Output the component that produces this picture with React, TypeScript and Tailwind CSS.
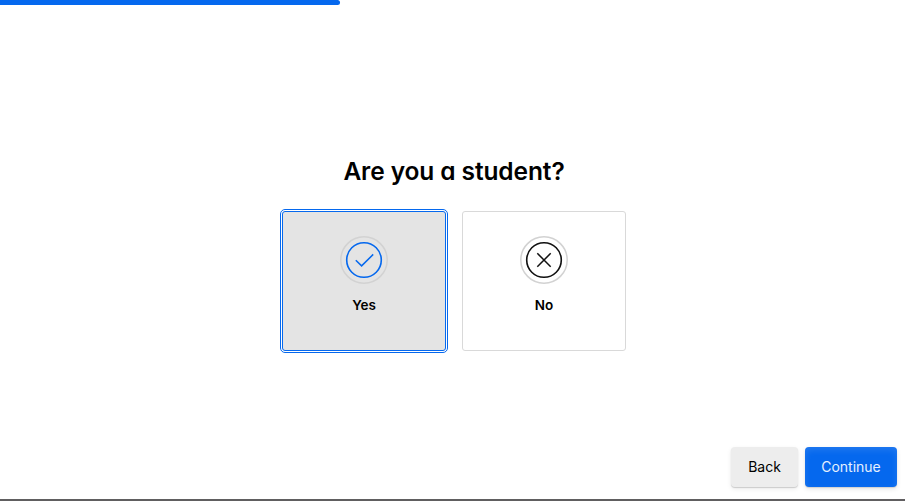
import React from "react";

type ChoiceProps = { label: string; selected?: boolean; children: React.ReactNode };

function Choice({ label, selected = false, children }: ChoiceProps) {
  return (
    <button
      type="button"
      aria-pressed={selected}
      className={
        "flex h-[140px] w-[164px] flex-col items-center rounded-[3px] border pt-6 text-black " +
        (selected
          ? "border-[#0568ee] bg-[#e4e4e4] outline-1 outline-offset-1 outline-[#0568ee]"
          : "border-[#d9d9d9] bg-white")
      }
    >
      <svg width="48" height="48" viewBox="0 0 48 48" fill="none">
        <circle cx="24" cy="24" r="23.2" stroke="#d2d2d2" strokeWidth="1.5" />
        {children}
      </svg>
      <span className="mt-[11px] text-[13.5px] leading-5 font-semibold">{label}</span>
    </button>
  );
}

export default function App() {
  return (
    <main className="flex h-[501px] w-[905px] flex-col overflow-hidden bg-white font-['Inter','Liberation_Sans',sans-serif] text-black">
      <div className="h-[5px] w-[340px] shrink-0 rounded-r-[3px] bg-[#0568ee]" />
      <section className="flex flex-1 flex-col items-center pt-[150px]">
        <h1 className="ml-[3px] text-[24.5px] leading-8 font-semibold tracking-[-0.1px] whitespace-nowrap [font-feature-settings:'cv11']">
          Are you a student?
        </h1>
        <div className="mt-6 ml-[3px] flex gap-4">
          <Choice label="Yes" selected>
            <circle cx="24" cy="24" r="17.3" stroke="#0568ee" strokeWidth="1.6" />
            <path d="M15.8 24.2 21.6 29.9 33.2 18.4" stroke="#0568ee" strokeWidth="1.5" />
          </Choice>
          <Choice label="No">
            <circle cx="24" cy="24" r="17.3" stroke="#111" strokeWidth="1.6" />
            <path d="m17.3 17.3 13.4 13.4m0-13.4L17.3 30.7" stroke="#111" strokeWidth="1.5" />
          </Choice>
        </div>
      </section>
      <footer className="flex h-[54px] shrink-0 justify-end gap-[7px] border-b-2 border-[#605e60] pr-2 text-sm">
        <button type="button" className="h-10 w-[67px] rounded bg-[#ededed] shadow-[0_1px_1px_rgba(0,0,0,0.16),0_2px_5px_rgba(0,0,0,0.08)]">
          Back
        </button>
        <button type="button" className="h-10 w-[92px] rounded bg-[#0568ee] text-[#e6f0fe] shadow-[0_1px_1px_rgba(0,0,0,0.12),0_2px_5px_rgba(0,0,0,0.1),inset_0_3px_7px_rgba(255,255,255,0.12)]">
          Continue
        </button>
      </footer>
    </main>
  );
}
